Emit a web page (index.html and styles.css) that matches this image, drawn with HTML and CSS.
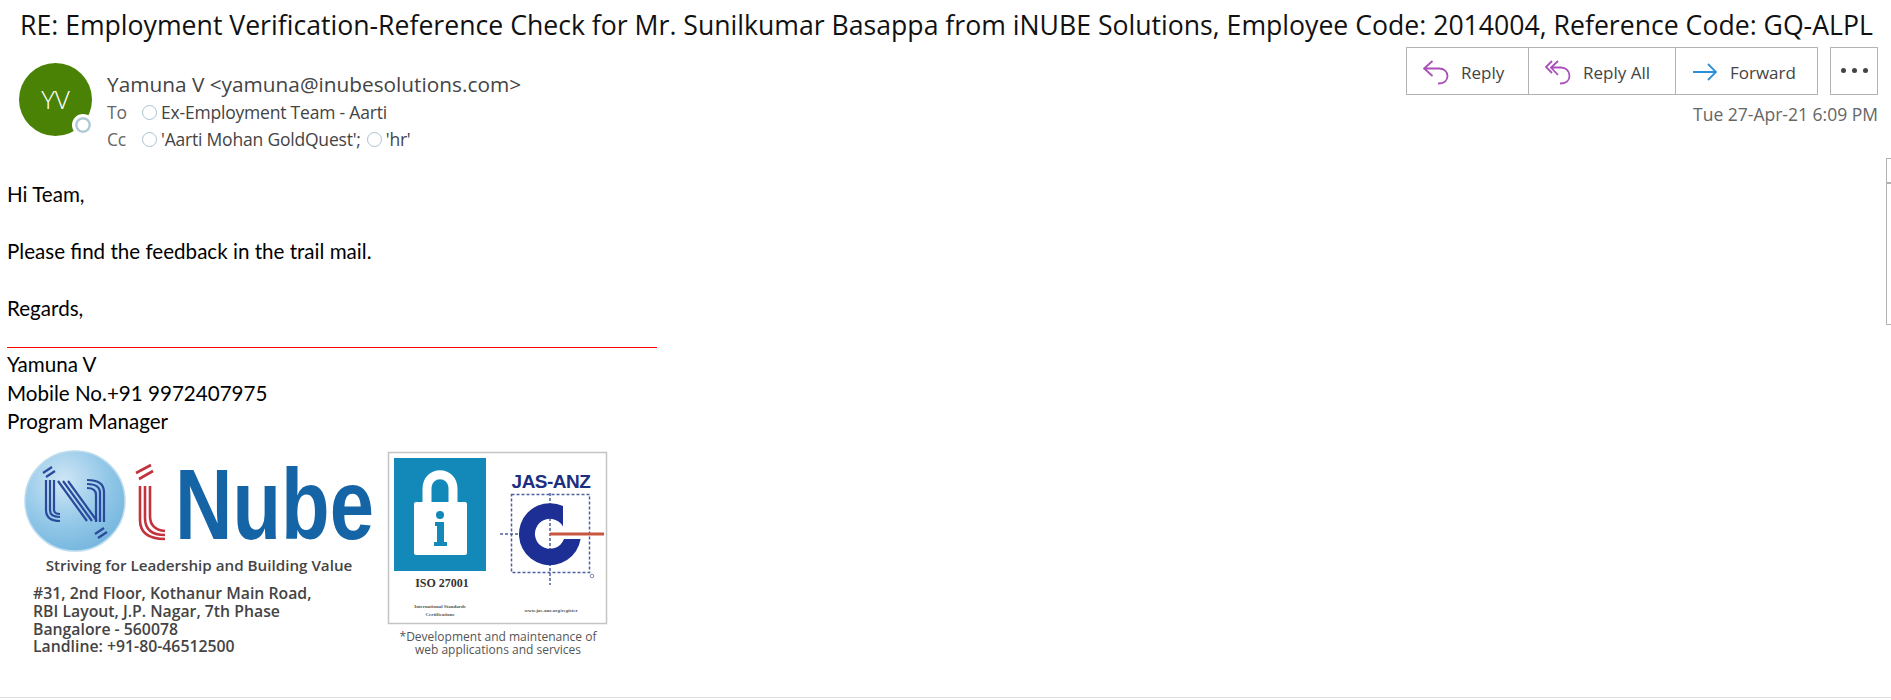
FILE: index.html
```html
<!DOCTYPE html>
<html lang="en">
<head>
	<meta charset="UTF-8">
	<title>RE: Employment Verification</title>
	<link rel="stylesheet" href="styles.css">
</head>
<body>
	<h1 class="subject">RE: Employment Verification-Reference Check for Mr. Sunilkumar Basappa from iNUBE Solutions, Employee Code: 2014004, Reference Code: GQ-ALPL</h1>

	<section class="head">
		<div class="avatar">YV<span class="presence"></span></div>
		<div class="people">
			<div class="from">Yamuna V &lt;yamuna@inubesolutions.com&gt;</div>
			<div class="row"><span class="label">To</span><span class="dot"></span><span>Ex-Employment Team - Aarti</span></div>
			<div class="row"><span class="label">Cc</span><span class="dot"></span><span>'Aarti Mohan GoldQuest';</span><span class="dot second"></span><span>'hr'</span></div>
		</div>
		<div class="side">
			<div class="actions">
				<div class="group">
					<button class="btn reply">
						<svg width="26" height="25" viewBox="0 0 26 25"><path class="purple" d="M9.500 1 L1 8.500 L9.500 16 M1 8.500 H16 C21 8.500 24.500 11.500 24.500 16 C24.500 20.500 21 23.500 15 23.500"/></svg>
						Reply
					</button>
					<button class="btn replyall">
						<svg width="26" height="25" viewBox="0 0 26 25"><path class="purple" d="M7 1 L1 7 L7 13 M13 1 L6 7.500 L13 15 M6 7.500 H16 C21 7.500 24.500 11 24.500 16 C24.500 20.500 21 23.500 15 23.500"/></svg>
						Reply All
					</button>
					<button class="btn forward">
						<svg width="24" height="18" viewBox="0 0 24 18"><path class="blue" d="M0 9 H23 M15 1 L23 9 L15 17"/></svg>
						Forward
					</button>
				</div>
				<button class="more"><i></i><i></i><i></i></button>
			</div>
			<div class="date">Tue 27-Apr-21 6:09 PM</div>
		</div>
	</section>

	<section class="mail">
		<p>Hi Team,</p>
		<p>&nbsp;</p>
		<p>Please find the feedback in the trail mail.</p>
		<p>&nbsp;</p>
		<p>Regards,</p>
		<p class="rule"></p>
		<p>Yamuna V</p>
		<p>Mobile No.+91 9972407975</p>
		<p>Program Manager</p>
	</section>

	<svg class="logos" width="640" height="258" viewBox="0 436 640 258">
		<defs>
			<radialGradient id="ball" cx="0.38" cy="0.3" r="0.8">
				<stop offset="0" stop-color="#cfe6f5"/>
				<stop offset="0.55" stop-color="#93c8e8"/>
				<stop offset="1" stop-color="#6fb2dc"/>
			</radialGradient>
		</defs>
		<circle cx="75" cy="499" r="50" fill="url(#ball)" stroke="#bcdcef" stroke-width="1.500"/>
		<g fill="none" stroke="#2a4a9c" stroke-width="2.200">
			<path d="M46 478 V508 C46 515 50 519 60 519 M50 478 V508 C50 513 53 515 60 515 M54 478 V508 C54 510 56 512 60 512"/>
			<path d="M58 479 L87 519 M63 479 L92 519 M68 479 L97 519"/>
			<path d="M87 478 C98 478 104 482 104 490 V520 M87 482 C96 482 100 485 100 491 V520 M87 486 C93 486 96 488 96 493 V520"/>
			<path d="M43 471 L52 465 M46 475 L55 469 M95 532 L104 526 M98 536 L107 530"/>
		</g>
		<g fill="none" stroke="#c2333d" stroke-width="2.600">
			<path d="M136 471 L151 463 M139 477 L153 469"/>
			<path d="M140 484 V518 C140 531 148 537 165 537 M145 484 V516 C145 527 151 533 165 533 M150 484 V514 C150 522 154 528 165 529"/>
		</g>
		<text class="brand" x="175" y="537" textLength="199" lengthAdjust="spacingAndGlyphs">Nube</text>
		<text class="tagline" x="199" y="569" text-anchor="middle">Striving for Leadership and Building Value</text>
		<g class="address">
			<text x="33" y="597">#31, 2nd Floor, Kothanur Main Road,</text>
			<text x="33" y="615">RBI Layout, J.P. Nagar, 7th Phase</text>
			<text x="33" y="633">Bangalore - 560078</text>
			<text x="33" y="650">Landline: +91-80-46512500</text>
		</g>

		<rect x="388.500" y="450.500" width="218" height="171" fill="#fff" stroke="#c4c4c4" stroke-width="1.500"/>
		<rect x="394" y="456" width="92" height="113" fill="#1289b8"/>
		<path d="M427 502 V487 C427 468 453 468 453 487 V502" fill="none" stroke="#fff" stroke-width="9"/>
		<rect x="414" y="500" width="53" height="53" rx="2" fill="#fff"/>
		<circle cx="440" cy="513" r="4" fill="#1289b8"/>
		<path d="M435 520 H444 V540 H447 V544 H434 V540 H437 V524 H435 Z" fill="#1289b8"/>
		<text class="iso" x="442" y="585" text-anchor="middle">ISO 27001</text>
		<text class="fine" x="440" y="606" text-anchor="middle">International Standards</text>
		<text class="fine" x="440" y="614" text-anchor="middle">Certifications</text>
		<text class="fine" x="551" y="610" text-anchor="middle">www.jas-anz.org/register</text>
		<text class="jas" x="551" y="486" text-anchor="middle">JAS-ANZ</text>
		<rect x="511.500" y="492.500" width="78" height="78" fill="none" stroke="#4a5f9f" stroke-width="1.500" stroke-dasharray="3 2"/>
		<path d="M550 491 V583 M500 532 H520" stroke="#4a5f9f" stroke-width="1.500" stroke-dasharray="3 2"/>
		<path d="M563 504 A31 31 0 1 0 580.600 537 H564 A15 15 0 1 1 563 524.500 Z" fill="#1d2f94"/>
		<path d="M550 532 H604" stroke="#c8553f" stroke-width="3"/>
		<circle cx="592" cy="574" r="1.800" fill="none" stroke="#7a8ab5"/>
		<text class="caption" x="498" y="639" text-anchor="middle">*Development and maintenance of</text>
		<text class="caption" x="498" y="652" text-anchor="middle">web applications and services</text>
	</svg>

	<div class="bottom"></div>
	<div class="scrollpiece"></div>
</body>
</html>
```

FILE: styles.css
```css
*{
	margin: 0;
	padding: 0;
	box-sizing: border-box;
}
html, body{
	height: 700px;
	overflow: hidden;
}
body{
	background-color: #fff;
	font-family: 'Open Sans', 'Noto Sans', sans-serif;
	position: relative;
}
.subject{
	font-size: 26.630px;
	font-weight: 400;
	line-height: 36px;
	height: 47px;
	color: #111;
	padding: 7px 0 0 20px;
	white-space: nowrap;
}
.head{
	display: flex;
	height: 133px;
	padding: 0 13px 0 19px;
}
.avatar{
	width: 73px;
	height: 73px;
	margin-top: 16px;
	border-radius: 50%;
	background-color: #498205;
	color: #fff;
	font-size: 26px;
	font-weight: 300;
	line-height: 73px;
	text-align: center;
	position: relative;
}
.presence{
	position: absolute;
	right: -2px;
	bottom: 0;
	width: 22px;
	height: 22px;
	border-radius: 50%;
	background-color: #fff;
	border: 3px solid #fff;
	box-shadow: inset 0 0 0 2.500px #afc8d6;
}
.people{
	flex: 1;
	padding: 24px 0 0 15px;
	color: #444;
}
.from{
	font-size: 20.800px;
	line-height: 26px;
	margin-bottom: 2px;
}
.row{
	display: flex;
	align-items: center;
	font-size: 17.500px;
	line-height: 27px;
	height: 27px;
	letter-spacing: -0.2px;
}
.label{
	width: 35px;
	color: #666;
}
.dot{
	width: 15px;
	height: 15px;
	border-radius: 50%;
	border: 1px solid #a9c3d2;
	margin-right: 4px;
}
.dot.second{
	margin-left: 6px;
}
.side{
	display: flex;
	flex-direction: column;
	align-items: flex-end;
}
.actions{
	display: flex;
	gap: 12px;
}
.group{
	display: flex;
	height: 48px;
	border: 1px solid #b3b3b3;
}
.btn{
	display: flex;
	align-items: center;
	background: none;
	border: none;
	border-right: 1px solid #b3b3b3;
	font-family: inherit;
	font-size: 17px;
	color: #444;
	padding-top: 2px;
}
.btn:last-child{
	border-right: none;
}
.reply, .replyall{
	padding-left: 16px;
	gap: 12px;
}
.reply{
	width: 122px;
}
.replyall{
	width: 147px;
}
.forward{
	width: 141px;
	padding-left: 17px;
	gap: 13px;
}
.purple, .blue{
	fill: none;
	stroke-width: 1.800;
}
.purple{
	stroke: #a94fb8;
}
.blue{
	stroke: #2b90d9;
}
.more{
	width: 48px;
	height: 48px;
	background: none;
	border: 1px solid #b3b3b3;
	display: flex;
	justify-content: center;
	align-items: center;
	gap: 6px;
	padding-bottom: 2px;
}
.more i{
	width: 5px;
	height: 5px;
	border-radius: 50%;
	background-color: #444;
}
.date{
	font-size: 17.500px;
	line-height: 22px;
	color: #666;
	margin-top: 8px;
}
.mail{
	padding: 0 0 2px 7px;
	font-family: 'Lato', 'Liberation Sans', sans-serif;
	font-size: 20.600px;
	line-height: 28.400px;
	color: #000;
}
.rule{
	width: 650px;
	height: 26px;
	border-bottom: 1px solid #f00;
	margin-bottom: 2.400px;
}
.logos{
	display: block;
}
.brand{
	font: 700 100px 'Liberation Sans', sans-serif;
	fill: #1565a6;
}
.tagline{
	font: 600 15.200px 'Open Sans', sans-serif;
	fill: #444;
}
.address text{
	font: 600 15.800px 'Open Sans', sans-serif;
	fill: #444;
}
.iso{
	font: 700 12px 'Liberation Serif', serif;
	fill: #333;
}
.fine{
	font: 700 5px 'Liberation Serif', serif;
	fill: #555;
}
.jas{
	font: 700 19px 'Liberation Sans', sans-serif;
	fill: #1d2f7f;
	letter-spacing: -0.5px;
}
.caption{
	font: 400 12px 'Open Sans', sans-serif;
	fill: #555;
}
.bottom{
	margin-top: 1px;
	border-top: 1px solid #dcdcdc;
}
.scrollpiece{
	position: absolute;
	left: 1886px;
	top: 158px;
	width: 5px;
	height: 167px;
	border-left: 1px solid #b3b3b3;
	border-top: 1px solid #b3b3b3;
	border-bottom: 1px solid #b3b3b3;
}
.scrollpiece::before{
	content: '';
	display: block;
	margin-top: 23px;
	border-top: 2px solid #b3b3b3;
}
```
